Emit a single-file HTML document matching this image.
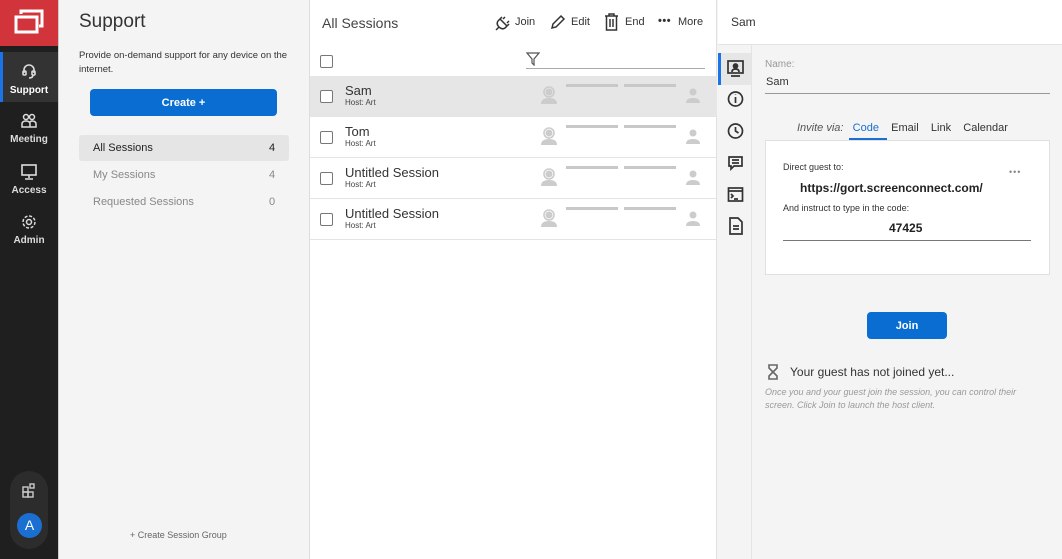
<!DOCTYPE html>
<html><head><style>
*{margin:0;padding:0;box-sizing:border-box}
body{width:1062px;height:559px;overflow:hidden;font-family:"Liberation Sans",sans-serif;background:#f4f4f4;position:relative;color:#333}
.a{position:absolute}
.nav{left:0;top:0;width:58px;height:559px;background:#1f1f1f}
.logo{left:0;top:0;width:58px;height:46px;background:#d1343a}
.ni{left:0;width:58px;text-align:center;color:#ddd;font-size:10px;font-weight:bold}
.p2{left:58px;top:0;width:252px;height:559px;background:#f4f4f4;border-left:1px solid #ccc;border-right:1px solid #ddd}
.p3{left:310px;top:0;width:407px;height:559px;background:#fff;border-right:1px solid #e0e0e0}
.row{left:0;width:407px;height:41px;border-bottom:1px solid #e4e4e4}
.cb{width:13px;height:13px;border:1.5px solid #777;border-radius:2px;background:#fff}
.nm{font-size:13px;color:#333}
.hs{font-size:8px;color:#444}
.bar{height:3px;background:#c8c8c8;width:52px}
.btn{background:#0a6dd1;border-radius:4px;color:#fff;font-size:11px;font-weight:bold;display:flex;align-items:center;justify-content:center}
.tb{font-size:11px;color:#333}
</style></head><body>
<div class="a nav"></div>
<div class="a logo"><svg width="58" height="46"><rect x="16" y="17" width="21" height="15" fill="none" stroke="#fff" stroke-width="3"/><path d="M21 14V11H42V26H39" fill="none" stroke="#fff" stroke-width="3"/></svg></div>
<div class="a" style="left:0;top:52px;width:58px;height:50px;background:#333;border-left:3px solid #1a73e8"></div>
<div class="a ni" style="top:62px"><svg width="18" height="18" viewBox="0 0 18 18" fill="none" stroke="#ddd" stroke-width="1.6"><path d="M4 11V8a5 5 0 0 1 10 0v3"/><rect x="3" y="9" width="3" height="4" rx="1"/><rect x="12" y="9" width="3" height="4" rx="1"/><path d="M13 13q0 3-4 3"/></svg><div style="color:#fff;margin-top:2px">Support</div></div>
<div class="a ni" style="top:113px"><svg width="18" height="16" viewBox="0 0 18 16" fill="none" stroke="#ddd" stroke-width="1.5"><circle cx="6" cy="4" r="2.5"/><circle cx="12" cy="4" r="2.5"/><path d="M2 14v-3q0-3 4-3t4 3v3zM10 9q1-1 2-1 4 0 4 3v3h-6"/></svg><div style="margin-top:2px">Meeting</div></div>
<div class="a ni" style="top:164px"><svg width="18" height="16" viewBox="0 0 18 16" fill="none" stroke="#ddd" stroke-width="1.6"><rect x="2" y="1" width="14" height="10"/><path d="M9 11v3M5 15h8"/></svg><div style="margin-top:2px">Access</div></div>
<div class="a ni" style="top:214px"><svg width="18" height="16" viewBox="0 0 18 16" fill="none" stroke="#ddd" stroke-width="1.5"><circle cx="9" cy="8" r="2.5"/><circle cx="9" cy="8" r="6" stroke-dasharray="3 1.7"/></svg><div style="margin-top:2px">Admin</div></div>
<div class="a" style="left:10px;top:471px;width:38px;height:78px;background:#2c2c2c;border-radius:19px"></div>
<svg class="a" style="left:21px;top:483px" width="16" height="16" viewBox="0 0 16 16" fill="none" stroke="#ccc" stroke-width="1.4"><rect x="2" y="4" width="5" height="5"/><rect x="2" y="9" width="5" height="5"/><rect x="7" y="9" width="5" height="5"/><rect x="9" y="1" width="4" height="4"/></svg>
<div class="a" style="left:17px;top:513px;width:25px;height:25px;border-radius:50%;background:#1a6fd1;color:#fff;text-align:center;line-height:25px;font-size:14px">A</div>

<div class="a p2"></div>
<div class="a" style="left:79px;top:11px;font-size:19px;color:#333">Support</div>
<div class="a" style="left:79px;top:49px;font-size:9.5px;line-height:14px;color:#333;width:220px">Provide on-demand support for any device on the internet.</div>
<div class="a btn" style="left:90px;top:89px;width:187px;height:27px">Create +</div>
<div class="a" style="left:79px;top:135px;width:210px;height:26px;background:#e5e5e5;border-radius:3px"></div>
<div class="a" style="left:93px;top:142px;font-size:11px;color:#222">All Sessions</div><div class="a" style="left:269px;top:142px;font-size:11px;color:#222">4</div>
<div class="a" style="left:93px;top:169px;font-size:11px;color:#888">My Sessions</div><div class="a" style="left:269px;top:169px;font-size:11px;color:#888">4</div>
<div class="a" style="left:93px;top:196px;font-size:11px;color:#888">Requested Sessions</div><div class="a" style="left:269px;top:196px;font-size:11px;color:#888">0</div>
<div class="a" style="left:130px;top:530px;font-size:9px;color:#666">+ Create Session Group</div>

<div class="a p3">
<div class="a" style="left:12px;top:15px;font-size:14px;color:#444">All Sessions</div>
<div class="a cb" style="left:10px;top:55px"></div>
<svg class="a" style="left:216px;top:52px" width="14" height="14" viewBox="0 0 14 14" fill="none" stroke="#555" stroke-width="1.2"><path d="M1 1h12L8 7v6L6 11V7z"/></svg>
<div class="a" style="left:216px;top:68px;width:179px;height:1px;background:#aaa"></div>
<div class="a row" style="top:76px;background:#e6e6e6"></div>
<div class="a row" style="top:117px"></div>
<div class="a row" style="top:158px"></div>
<div class="a row" style="top:199px"></div>
</div>
<svg class="a" style="left:494px;top:14px" width="18" height="18" viewBox="0 0 18 18" fill="none" stroke="#333" stroke-width="1.5"><path d="M6 5l7 7M8 3l-4 4q-2 3 1 6t6 1l4-4M2 16l3-3M11 3l-2 2M15 7l-2 2"/></svg>
<div class="a tb" style="left:515px;top:16px">Join</div>
<svg class="a" style="left:550px;top:14px" width="16" height="16" viewBox="0 0 16 16" fill="none" stroke="#333" stroke-width="1.5"><path d="M2 14l1-4 8-8 3 3-8 8z"/></svg>
<div class="a tb" style="left:571px;top:16px">Edit</div>
<svg class="a" style="left:604px;top:13px" width="15" height="18" viewBox="0 0 15 18" fill="none" stroke="#333" stroke-width="1.5"><path d="M1 3h13M5 3V1h5v2M2.5 3v14h10V3M6 6v8M9 6v8"/></svg>
<div class="a tb" style="left:625px;top:16px">End</div>
<div class="a tb" style="left:658px;top:15px;font-weight:bold;letter-spacing:0.5px">•••</div>
<div class="a tb" style="left:678px;top:16px">More</div>
<div id="rows"></div>
<script>
var n=["Sam","Tom","Untitled Session","Untitled Session"],h="";
for(var i=0;i<4;i++){var y=76+i*41;
h+='<div class="a cb" style="left:320px;top:'+(y+14)+'px"></div>'+
'<div class="a nm" style="left:345px;top:'+(y+7)+'px">'+n[i]+'</div>'+
'<div class="a hs" style="left:345px;top:'+(y+22)+'px">Host: Art</div>'+
'<svg class="a" style="left:540px;top:'+(y+8)+'px" width="18" height="22" viewBox="0 0 18 22"><circle cx="9" cy="8" r="5" fill="none" stroke="#ccc" stroke-width="1.6"/><circle cx="9" cy="8" r="3.5" fill="#ccc"/><path d="M1 20q0-6 8-6t8 6z" fill="#ccc"/></svg>'+
'<div class="a bar" style="left:566px;top:'+(y+8)+'px"></div><div class="a bar" style="left:624px;top:'+(y+8)+'px"></div>'+
'<svg class="a" style="left:686px;top:'+(y+12)+'px" width="14" height="16" viewBox="0 0 14 16" fill="#ccc"><circle cx="7" cy="4" r="3.5"/><path d="M0 15q0-5 7-5t7 5z"/></svg>';}
document.getElementById("rows").innerHTML=h;
</script>

<div class="a" style="left:718px;top:0;width:344px;height:45px;background:#fff;border-bottom:1px solid #e4e4e4"></div>
<div class="a" style="left:731px;top:15px;font-size:12px;color:#333">Sam</div>
<div class="a" style="left:717px;top:45px;width:35px;height:514px;background:#f4f4f4;border-right:1px solid #e4e4e4"></div>
<div class="a" style="left:718px;top:53px;width:33px;height:32px;background:#e6e6e6;border-left:3px solid #1a73e8"></div>
<svg class="a" style="left:725px;top:58px" width="22" height="190" viewBox="0 0 22 190" fill="none" stroke="#333" stroke-width="1.7">
<rect x="3" y="3" width="15" height="12"/><circle cx="10.5" cy="8" r="2" fill="#333"/><path d="M7 14q0-3 3.5-3t3.5 3M6 18h9"/>
<circle cx="10.5" cy="41" r="7"/><path d="M10.5 39v6M10.5 36.5v.5"/>
<circle cx="10.5" cy="73" r="7"/><path d="M10.5 69v4l3 2"/>
<path d="M4 99h13v9H9l-3 3v-3H4z"/><path d="M7 102h7M7 105h7"/>
<rect x="3.5" y="130" width="14" height="13"/><path d="M3.5 133h14M6 136l2 2-2 2M9 141h4"/>
<path d="M5 160h8l4 4v12H5z"/><path d="M8 168h6M8 171h6"/>
</svg>
<div class="a" style="left:765px;top:59px;font-size:10px;color:#999">Name:</div>
<div class="a" style="left:766px;top:76px;font-size:11px;color:#333">Sam</div>
<div class="a" style="left:765px;top:93px;width:285px;height:1px;background:#999"></div>
<div class="a" style="left:797px;top:122px;font-size:11px;color:#333"><i style="color:#555">Invite via:</i>&nbsp;&nbsp;&nbsp;<span style="color:#1a6fd1">Code</span>&nbsp;&nbsp;&nbsp;&nbsp;Email&nbsp;&nbsp;&nbsp;&nbsp;Link&nbsp;&nbsp;&nbsp;&nbsp;Calendar</div>
<div class="a" style="left:849px;top:138px;width:38px;height:2px;background:#1a6fd1"></div>
<div class="a" style="left:765px;top:140px;width:285px;height:135px;background:#fff;border:1px solid #e0e0e0"></div>
<div class="a" style="left:783px;top:162px;font-size:9px;color:#333">Direct guest to:</div>
<div class="a" style="left:1009px;top:167px;font-size:9px;color:#888;letter-spacing:1px">•••</div>
<div class="a" style="left:800px;top:181px;font-size:12px;font-weight:bold;color:#222">https://gort.screenconnect.com/</div>
<div class="a" style="left:783px;top:203px;font-size:9px;color:#333">And instruct to type in the code:</div>
<div class="a" style="left:889px;top:221px;font-size:12px;font-weight:bold;color:#222">47425</div>
<div class="a" style="left:783px;top:240px;width:248px;height:1px;background:#777"></div>
<div class="a btn" style="left:867px;top:312px;width:80px;height:27px">Join</div>
<svg class="a" style="left:767px;top:364px" width="12" height="16" viewBox="0 0 12 16" fill="none" stroke="#666" stroke-width="1.6"><path d="M2 1h8v3L6 8l4 4v3H2v-3l4-4-4-4z"/></svg>
<div class="a" style="left:790px;top:365px;font-size:12px;color:#333">Your guest has not joined yet...</div>
<div class="a" style="left:765px;top:386px;font-size:9px;line-height:13px;color:#999;font-style:italic;width:272px">Once you and your guest join the session, you can control their screen. Click Join to launch the host client.</div>
</body></html>
